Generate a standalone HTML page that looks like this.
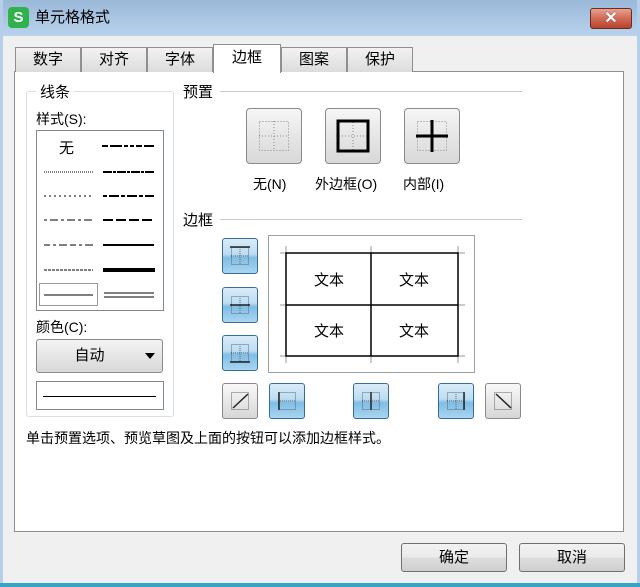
<!DOCTYPE html>
<html><head><meta charset="utf-8"><style>
*{margin:0;padding:0;box-sizing:border-box}
body{width:640px;height:587px;overflow:hidden;background:#f0f0f0;font-family:"Liberation Sans","Noto Sans CJK SC",sans-serif;font-size:14px;color:#000;position:relative}
.a{position:absolute}
.tab{position:absolute;top:47px;height:25px;background:linear-gradient(#f2f2f2,#dcdcdc);border:1px solid #8e8f8f;border-bottom:none;text-align:center;line-height:23px;font-size:15px}
.gbtn{position:absolute;width:56px;height:56px;border:1px solid #8a8a8a;border-radius:4px;background:linear-gradient(#f6f6f6,#e6e6e6 50%,#d8d8d8)}
.bb{position:absolute;width:36px;height:36px;border:1px solid #3a6d96;border-radius:3px;background:linear-gradient(#d9ecf9,#bcdcf2 45%,#7fbde6 55%,#a9d5f1)}
.wb{position:absolute;width:36px;height:36px;border:1px solid #8a8a8a;border-radius:3px;background:linear-gradient(#f8f8f8,#e8e8e8 50%,#d6d6d6)}
.btn{position:absolute;height:29px;width:106px;border:1px solid #707070;border-radius:3px;background:linear-gradient(#f2f2f2,#ebebeb 50%,#dddddd 51%,#cfcfcf);text-align:center;line-height:27px;font-size:15px}
.hl{position:absolute;height:1px;background:#c8c8c8}
</style></head><body>
<div class="a" style="left:0;top:0;width:640px;height:36px;background:linear-gradient(#9ab8d8,#b9d3ec)"></div>
<div class="a" style="left:0;top:0;width:3px;height:587px;background:#b5cfe8"></div>
<div class="a" style="left:637px;top:0;width:3px;height:587px;background:#b5cfe8"></div>
<div class="a" style="left:0;top:583px;width:640px;height:4px;background:#39a2c9"></div>
<div class="a" style="left:3px;top:36px;width:634px;height:547px;background:#f0f0f0"></div>
<div class="a" style="left:8px;top:7px;width:21px;height:21px;border-radius:4px;background:#2fb24b;color:#fff;font-weight:bold;font-size:15px;text-align:center;line-height:21px">S</div>
<div class="a" style="left:35px;top:7px;font-size:15px;line-height:22px">单元格格式</div>
<div class="a" style="left:590px;top:8px;width:42px;height:21px;border:1px solid #6b2a22;border-radius:3px;background:linear-gradient(#e8a292,#d06a55 50%,#b8432d);color:#fff;font-weight:bold;text-align:center;line-height:19px;font-size:16px;text-shadow:0 0 1px #333">✕</div>

<div class="a" style="left:14px;top:71px;width:610px;height:461px;background:#fff;border:1px solid #8e8f8f"></div>
<div class="tab" style="left:15px;width:66px">数字</div>
<div class="tab" style="left:81px;width:66px">对齐</div>
<div class="tab" style="left:147px;width:66px">字体</div>
<div class="tab" style="left:281px;width:66px">图案</div>
<div class="tab" style="left:347px;width:66px">保护</div>
<div class="tab" style="left:213px;top:44px;height:29px;width:68px;background:#fff;line-height:25px">边框</div>

<div class="a" style="left:26px;top:91px;width:148px;height:326px;border:1px solid #d5dfe5;border-radius:3px"></div>
<div class="a" style="left:36px;top:81px;background:#fff;padding:0 4px;font-size:15px">线条</div>
<div class="a" style="left:36px;top:109px;font-size:14px">样式(S):</div>
<div class="a" style="left:36px;top:130px;width:128px;height:181px;border:1px solid #828790"></div>
<svg class="a" style="left:37px;top:131px" width="126" height="179">
<text x="22" y="22" font-size="15" font-family="Noto Sans CJK SC">无</text>
<g stroke="#000">
<line x1="65" y1="15" x2="117" y2="15" stroke-width="2" stroke-dasharray="6 2 12 2 4 2 4 2"/>
<line x1="7" y1="41" x2="56" y2="41" stroke-dasharray="1 1"/>
<line x1="66" y1="41" x2="117" y2="41" stroke-width="2" stroke-dasharray="9 1 3 1"/>
<line x1="7" y1="65" x2="56" y2="65" stroke-dasharray="2 3"/>
<line x1="66" y1="65" x2="117" y2="65" stroke-width="2" stroke-dasharray="4 2 10 2"/>
<line x1="7" y1="89" x2="56" y2="89" stroke-dasharray="3 3 8 3"/>
<line x1="66" y1="89" x2="117" y2="89" stroke-width="2" stroke-dasharray="10 3"/>
<line x1="7" y1="114" x2="56" y2="114" stroke-dasharray="6 3 3 3 8 3"/>
<line x1="66" y1="114" x2="117" y2="114" stroke-width="2"/>
<line x1="7" y1="139" x2="56" y2="139" stroke-dasharray="3 1"/>
<line x1="66" y1="139" x2="118" y2="139" stroke-width="4"/>
<line x1="7" y1="164" x2="56" y2="164"/>
<line x1="67" y1="162" x2="117" y2="162"/><line x1="67" y1="166" x2="117" y2="166"/>
</g>
<rect x="2.5" y="152.5" width="58" height="22" fill="none" stroke="#999"/>
</svg>
<div class="a" style="left:36px;top:317px;font-size:14px">颜色(C):</div>
<div class="a" style="left:36px;top:339px;width:127px;height:34px;border:1px solid #8a8a8a;border-radius:3px;background:linear-gradient(#f4f4f4,#e6e6e6 50%,#d8d8d8);text-align:center;line-height:32px;font-size:15px;padding-right:20px">自动</div>
<div class="a" style="left:145px;top:353px;width:0;height:0;border-left:5px solid transparent;border-right:5px solid transparent;border-top:6px solid #000"></div>
<div class="a" style="left:36px;top:381px;width:128px;height:29px;border:1px solid #828790"></div>
<div class="a" style="left:43px;top:396px;width:113px;height:1px;background:#000"></div>

<div class="a" style="left:183px;top:81px;font-size:15px">预置</div>
<div class="hl" style="left:220px;top:91px;width:302px"></div>
<div class="gbtn" style="left:246px;top:108px"></div>
<div class="gbtn" style="left:325px;top:108px"></div>
<div class="gbtn" style="left:404px;top:108px"></div>
<svg class="a" style="left:246px;top:108px" width="220" height="56">
<g fill="none" stroke="#888" stroke-dasharray="1 2">
<rect x="13.5" y="13.5" width="29" height="29"/><line x1="28" y1="13" x2="28" y2="43"/><line x1="13" y1="28" x2="43" y2="28"/>
<line x1="107" y1="14" x2="107" y2="43"/><line x1="93" y1="28" x2="122" y2="28"/>
<rect x="171.5" y="13.5" width="29" height="29"/>
</g>
<rect x="92" y="13" width="30" height="30" fill="none" stroke="#000" stroke-width="3"/>
<g stroke="#000" stroke-width="3"><line x1="186" y1="12" x2="186" y2="44"/><line x1="170" y1="28" x2="202" y2="28"/></g>
</svg>
<div class="a" style="left:253px;top:174px;font-size:14px">无(N)</div>
<div class="a" style="left:315px;top:174px;font-size:14px">外边框(O)</div>
<div class="a" style="left:403px;top:174px;font-size:14px">内部(I)</div>

<div class="a" style="left:183px;top:209px;font-size:15px">边框</div>
<div class="hl" style="left:220px;top:219px;width:302px"></div>

<div class="bb" style="left:222px;top:238px"></div>
<div class="bb" style="left:222px;top:287px"></div>
<div class="bb" style="left:222px;top:335px"></div>
<div class="wb" style="left:222px;top:383px"></div>
<div class="bb" style="left:269px;top:383px"></div>
<div class="bb" style="left:353px;top:383px"></div>
<div class="bb" style="left:438px;top:383px"></div>
<div class="wb" style="left:485px;top:383px"></div>
<svg class="a" style="left:222px;top:238px" width="300" height="182">
<g fill="none" stroke="#666" stroke-dasharray="1 1">
<rect x="9.5" y="9.5" width="17" height="17"/><line x1="18" y1="9" x2="18" y2="27"/><line x1="9" y1="18" x2="27" y2="18"/>
<rect x="9.5" y="58.5" width="17" height="17"/><line x1="18" y1="58" x2="18" y2="76"/>
<rect x="9.5" y="106.5" width="17" height="17"/><line x1="18" y1="106" x2="18" y2="124"/><line x1="9" y1="115" x2="27" y2="115"/>
<rect x="9.5" y="154.5" width="17" height="17"/>
<rect x="56.5" y="154.5" width="17" height="17"/><line x1="56" y1="163" x2="74" y2="163"/>
<rect x="140.5" y="154.5" width="17" height="17"/><line x1="140" y1="163" x2="158" y2="163"/>
<rect x="225.5" y="154.5" width="17" height="17"/><line x1="234" y1="154" x2="234" y2="172"/><line x1="225" y1="163" x2="243" y2="163"/>
<rect x="272.5" y="154.5" width="17" height="17"/>
</g>
<g stroke="#222" stroke-width="1.5">
<line x1="8" y1="9" x2="28" y2="9"/>
<line x1="8" y1="67" x2="28" y2="67"/>
<line x1="8" y1="124" x2="28" y2="124"/>
<line x1="11" y1="170" x2="26" y2="156"/>
<line x1="57" y1="154" x2="57" y2="172"/>
<line x1="149" y1="154" x2="149" y2="172"/>
<line x1="242" y1="154" x2="242" y2="172"/>
<line x1="274" y1="156" x2="289" y2="170"/>
</g>
</svg>

<div class="a" style="left:268px;top:235px;width:207px;height:138px;border:1px solid #a0a0a0"></div>
<svg class="a" style="left:268px;top:235px" width="207" height="138">
<g stroke="#999"><line x1="12" y1="18" x2="197" y2="18"/><line x1="12" y1="121" x2="197" y2="121"/><line x1="12" y1="70" x2="197" y2="70"/>
<line x1="18" y1="11" x2="18" y2="128"/><line x1="103" y1="11" x2="103" y2="128"/><line x1="190" y1="11" x2="190" y2="128"/></g>
<g stroke="#000" stroke-width="1.5" fill="none"><rect x="18" y="18" width="172" height="103"/><line x1="103" y1="18" x2="103" y2="121"/><line x1="18" y1="70" x2="190" y2="70"/></g>
<g font-size="15" font-family="Noto Sans CJK SC" text-anchor="middle"><text x="61" y="50">文本</text><text x="146" y="50">文本</text><text x="61" y="101">文本</text><text x="146" y="101">文本</text></g>
</svg>

<div class="a" style="left:26px;top:428px;font-size:14px">单击预置选项、预览草图及上面的按钮可以添加边框样式。</div>

<div class="btn" style="left:401px;top:543px">确定</div>
<div class="btn" style="left:519px;top:543px">取消</div>
</body></html>
